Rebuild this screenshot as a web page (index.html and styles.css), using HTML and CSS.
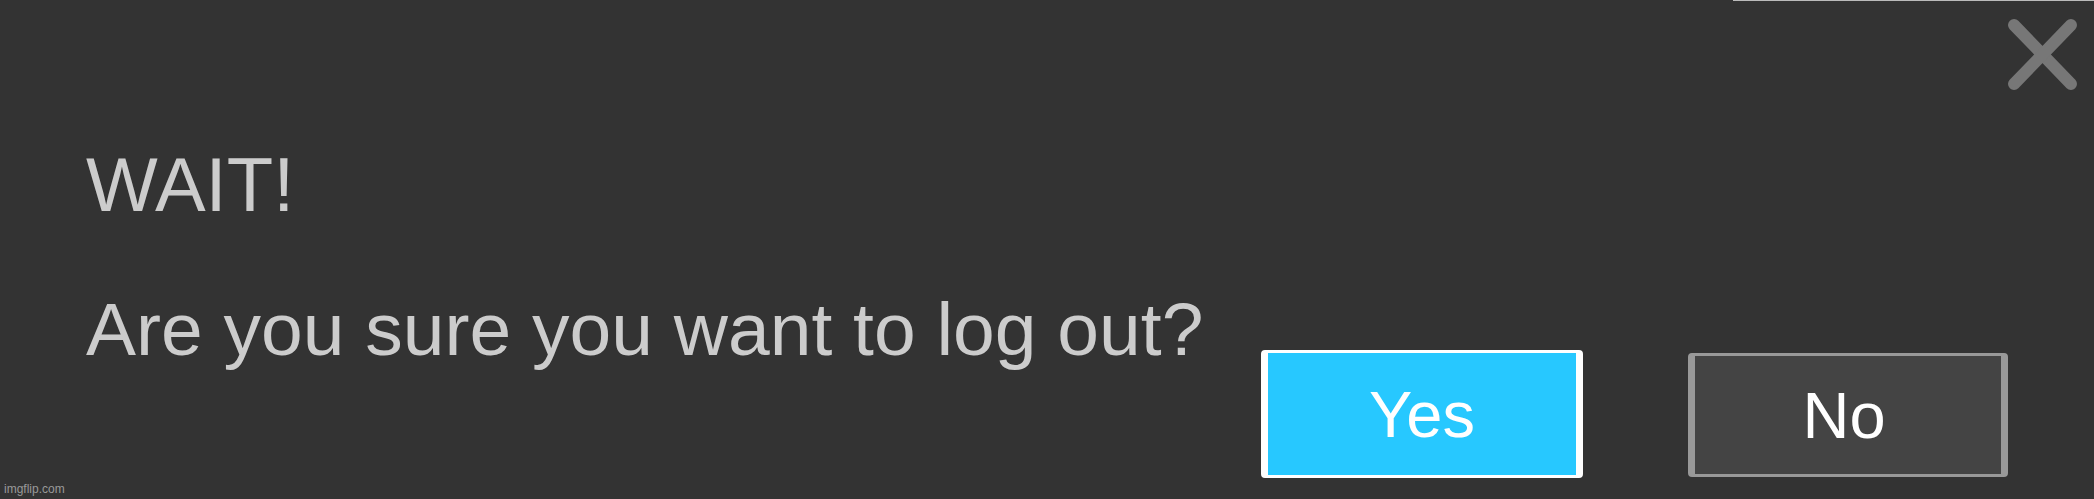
FILE: index.html
```html
<!DOCTYPE html>
<html>
  <head>
    <link rel="stylesheet" href="styles.css">
  </head>
  <body>
    <div class="topline"></div>
    <div class="dialog">
      <div class="top">
        <svg class="close" width="71" height="73" viewBox="0 0 71 73">
          <g stroke="#777" stroke-width="12" stroke-linecap="round">
            <line x1="7" y1="7" x2="64" y2="66"></line>
            <line x1="64" y1="7" x2="7" y2="66"></line>
          </g>
        </svg>
      </div>
      <p class="title">WAIT!</p>
      <div class="row">
        <p class="message">Are you sure you want to log out?</p>
        <div class="actions">
          <button class="btn yes">Yes</button>
          <button class="btn no">No</button>
        </div>
      </div>
    </div>
    <div class="mark">imgflip.com</div>
  </body>
</html>
```

FILE: styles.css
```css
* {
  margin: 0;
  padding: 0;
}

body {
  background: #333;
  height: 499px;
  overflow: hidden;
  position: relative;
  font-family: "Liberation Sans", Arial, sans-serif;
}

.topline {
  position: absolute;
  top: 0;
  right: 0;
  width: 361px;
  height: 1px;
  background: #bbb;
}

.dialog {
  display: flex;
  flex-direction: column;
  height: 100%;
  box-sizing: border-box;
  padding: 18px 16px 21px 86px;
}

.top {
  display: flex;
  justify-content: flex-end;
}

.close {
  display: block;
}

.title {
  color: #ccc;
  font-size: 76px;
  line-height: 76px;
  margin-top: 56px;
}

.row {
  flex: 1;
  display: flex;
  justify-content: space-between;
}

.message {
  color: #ccc;
  font-size: 75px;
  line-height: 75px;
  margin-top: 69px;
  white-space: nowrap;
}

.actions {
  align-self: flex-end;
  display: flex;
  align-items: flex-end;
  gap: 105px;
  margin-right: 70px;
}

.btn {
  box-sizing: border-box;
  font-family: inherit;
  font-size: 65px;
  color: #fff;
  border-style: solid;
  border-width: 3px 7px;
  border-radius: 4px;
}

.yes {
  width: 322px;
  height: 128px;
  background: #27c8ff;
  border-color: #fff;
}

.no {
  width: 320px;
  height: 124px;
  margin-bottom: 1px;
  padding-right: 8px;
  background: #444;
  border-color: #999;
}

.mark {
  position: absolute;
  left: 4px;
  bottom: 4px;
  font-size: 12px;
  line-height: 12px;
  color: #999;
}
```
